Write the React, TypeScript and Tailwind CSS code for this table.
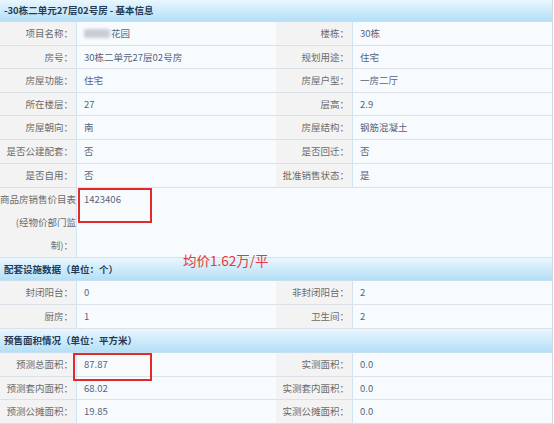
import React from "react";

const FONT = { fontFamily: '"Noto Sans CJK SC", "Noto Sans", sans-serif' };

type Cell = { label: string; value: React.ReactNode };

function Label({ children }: { children: React.ReactNode }) {
  return (
    <div className="w-[77px] shrink-0 bg-[#f3f3f3] border-r border-[#cfe3f1] flex items-center justify-end pr-[3px] text-[9.5px] text-[#6b6b6b] whitespace-nowrap">
      {children}
    </div>
  );
}

function Value({ children, wide }: { children: React.ReactNode; wide?: boolean }) {
  return (
    <div
      className={`${wide ? "w-[199px]" : "flex-1"} shrink-0 bg-[#f8fbfe] flex items-center pl-[7px] text-[9.5px] text-[#55637d] whitespace-nowrap`}
    >
      {children}
    </div>
  );
}

function Row({ h, left, right }: { h: string; left: Cell; right: Cell }) {
  return (
    <div className={`flex ${h} border-b border-[#dbe1e6]`}>
      <Label>{left.label}</Label>
      <Value wide>{left.value}</Value>
      <Label>{right.label}</Label>
      <Value>{right.value}</Value>
    </div>
  );
}

function Section({ h, children }: { h: string; children: React.ReactNode }) {
  return (
    <div
      className={`${h} flex items-center pl-[4px] text-[9.5px] font-bold text-[#243a55] bg-gradient-to-b from-[#e9f6fe] to-[#b4dff7] border-b border-[#c6e0ef]`}
    >
      {children}
    </div>
  );
}

export default function App() {
  return (
    <div className="relative w-[554px] h-[424px] bg-white overflow-hidden" style={FONT}>
      <div className="w-[553px] border-r border-[#cfd6dc]">
        <Section h="h-[22px]">-30栋二单元27层02号房 - 基本信息</Section>
        <Row
          h="h-[24px]"
          left={{
            label: "项目名称：",
            value: (
              <span className="flex items-center">
                <span className="inline-block w-[26px] h-[9px] bg-[#c9ced6] rounded-[2px] blur-[1.5px] mr-[1px]" />
                <span className="text-[#5a6780]">花园</span>
              </span>
            ),
          }}
          right={{ label: "楼栋：", value: "30栋" }}
        />
        <Row h="h-[23px]" left={{ label: "房号：", value: "30栋二单元27层02号房" }} right={{ label: "规划用途：", value: "住宅" }} />
        <Row h="h-[24px]" left={{ label: "房屋功能：", value: "住宅" }} right={{ label: "房屋户型：", value: "一房二厅" }} />
        <Row h="h-[23px]" left={{ label: "所在楼层：", value: "27" }} right={{ label: "层高：", value: "2.9" }} />
        <Row h="h-[24px]" left={{ label: "房屋朝向：", value: "南" }} right={{ label: "房屋结构：", value: "钢筋混凝土" }} />
        <Row h="h-[24px]" left={{ label: "是否公建配套：", value: "否" }} right={{ label: "是否回迁：", value: "否" }} />
        <Row h="h-[24px]" left={{ label: "是否自用：", value: "否" }} right={{ label: "批准销售状态：", value: "是" }} />
        <div className="flex h-[70px] border-b border-[#dbe1e6]">
          <div className="w-[77px] shrink-0 bg-[#f3f3f3] border-r border-[#cfe3f1] flex flex-col items-end pr-0 text-[9.5px] leading-[23px] text-[#6b6b6b] whitespace-nowrap overflow-hidden">
            <span>商品房销售价目表</span>
            <span>(经物价部门监</span>
            <span className="pr-[3px]">制)：</span>
          </div>
          <div className="flex-1 bg-[#f8fbfe] pl-[7px] text-[9.5px] leading-[23px] text-[#55637d]">1423406</div>
        </div>
        <Section h="h-[23px]">配套设施数据（单位：个）</Section>
        <Row h="h-[24px]" left={{ label: "封闭阳台：", value: "0" }} right={{ label: "非封闭阳台：", value: "2" }} />
        <Row h="h-[24px]" left={{ label: "厨房：", value: "1" }} right={{ label: "卫生间：", value: "2" }} />
        <Section h="h-[24px]">预售面积情况（单位：平方米）</Section>
        <Row h="h-[24px]" left={{ label: "预测总面积：", value: "87.87" }} right={{ label: "实测面积：", value: "0.0" }} />
        <Row h="h-[23px]" left={{ label: "预测套内面积：", value: "68.02" }} right={{ label: "实测套内面积：", value: "0.0" }} />
        <Row h="h-[24px]" left={{ label: "预测公摊面积：", value: "19.85" }} right={{ label: "实测公摊面积：", value: "0.0" }} />
      </div>

      <div className="absolute left-[78px] top-[188px] w-[74px] h-[35px] border-2 border-[#e12b2b]" />
      <div className="absolute left-[73px] top-[353px] w-[79px] h-[28px] border-2 border-[#e12b2b]" />
      <div className="absolute left-[183px] top-[253px] text-[13.5px] leading-[15px] text-[#e5393a] whitespace-nowrap">
        均价1.62万/平
      </div>
    </div>
  );
}
